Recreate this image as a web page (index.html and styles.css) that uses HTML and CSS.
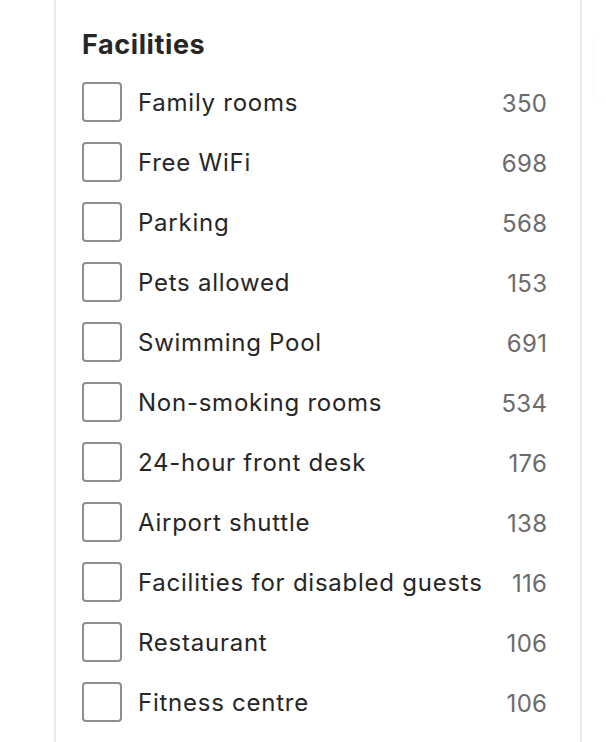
FILE: index.html
```html
<!DOCTYPE html>
<html lang="en">
<head>
<meta charset="utf-8">
<title>Facilities</title>
<link rel="stylesheet" href="styles.css">
</head>
<body>
<div class="page">
  <section class="panel">
    <h2 class="title">Facilities</h2>
    <ul class="list">
      <li class="row"><span class="box"></span><span class="label">Family rooms</span><span class="count">350</span></li>
      <li class="row"><span class="box"></span><span class="label">Free WiFi</span><span class="count">698</span></li>
      <li class="row"><span class="box"></span><span class="label">Parking</span><span class="count">568</span></li>
      <li class="row"><span class="box"></span><span class="label">Pets allowed</span><span class="count">153</span></li>
      <li class="row"><span class="box"></span><span class="label">Swimming Pool</span><span class="count">691</span></li>
      <li class="row"><span class="box"></span><span class="label">Non-smoking rooms</span><span class="count">534</span></li>
      <li class="row"><span class="box"></span><span class="label">24-hour front desk</span><span class="count">176</span></li>
      <li class="row"><span class="box"></span><span class="label">Airport shuttle</span><span class="count">138</span></li>
      <li class="row"><span class="box"></span><span class="label">Facilities for disabled guests</span><span class="count">116</span></li>
      <li class="row"><span class="box"></span><span class="label">Restaurant</span><span class="count">106</span></li>
      <li class="row"><span class="box"></span><span class="label">Fitness centre</span><span class="count">106</span></li>
    </ul>
  </section>
  <div class="ghost"></div>
</div>
</body>
</html>
```

FILE: styles.css
```css
html, body {
  margin: 0;
  padding: 0;
  background: #ffffff;
}
body {
  font-family: Inter, "Noto Sans", sans-serif;
  color: #262626;
  height: 742px;
  overflow: hidden;
}
.page {
  display: flex;
  align-items: flex-start;
  padding-left: 54px;
}
.panel {
  box-sizing: border-box;
  width: 528px;
  min-height: 742px;
  border-left: 2px solid #e8e8e8;
  border-right: 2px solid #e8e8e8;
  padding: 28px 33px 0 26px;
}
.title {
  margin: 0 0 20px 0;
  font-size: 27px;
  font-weight: 700;
  line-height: 34px;
  letter-spacing: 0.6px;
  color: #262626;
}
.list {
  list-style: none;
  margin: 0;
  padding: 0;
  display: flex;
  flex-direction: column;
  gap: 20px;
}
.row {
  display: flex;
  align-items: center;
  height: 40px;
}
.box {
  box-sizing: border-box;
  width: 40px;
  height: 40px;
  border: 2px solid #8f8f8f;
  border-radius: 4px;
  flex: none;
}
.label {
  margin-left: 16px;
  font-size: 24px;
  letter-spacing: 0.75px;
  flex: 1;
  white-space: nowrap;
}
.count {
  font-size: 24px;
  letter-spacing: 0.3px;
  margin-right: -0.3px;
  padding-top: 3px;
  color: #6b6b6b;
}
.ghost {
  margin-left: 14px;
  margin-top: 33px;
  width: 10px;
  height: 67px;
  box-shadow: 0 0 6px rgba(0,0,0,0.04);
}
```
